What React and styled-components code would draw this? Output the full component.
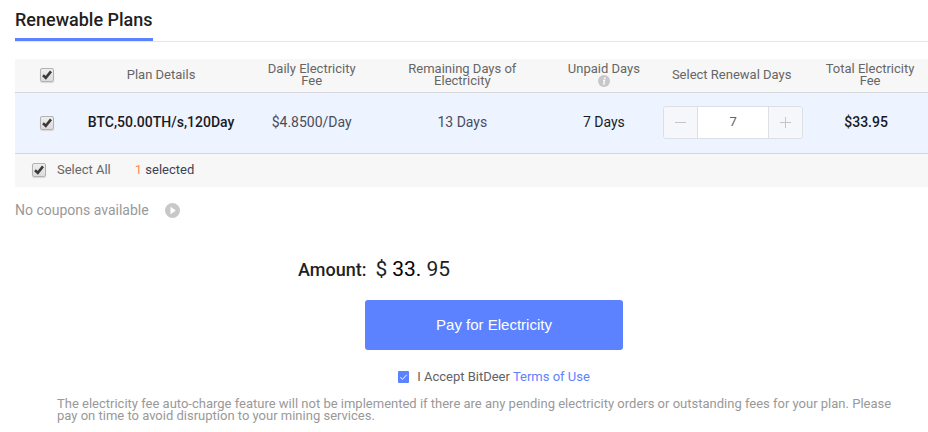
import React, { useState } from "react";
import styled, { createGlobalStyle } from "styled-components";

const Global = createGlobalStyle`
  * { box-sizing: border-box; }
  body { margin: 0; background: #fff; font-family: Roboto, "Liberation Sans", sans-serif; font-size: 13px; line-height: 16px; color: #666; }
  button, input { font: inherit; color: inherit; margin: 0; padding: 0; }
`;

const Page = styled.main`
  padding: 8px 0 8px 15px;
`;

const TitleBar = styled.header`
  display: flex;
  height: 34px;
  border-bottom: 1px solid #e6e6e6;
  margin-bottom: 17px;
`;

const Title = styled.h1`
  margin: 0;
  height: 33px;
  font-size: 18px;
  font-weight: 500;
  line-height: 24px;
  color: #1f1f24;
  border-bottom: 3px solid #5c82ff;
`;

const PlanTable = styled.table`
  width: 100%;
  table-layout: fixed;
  border-collapse: separate;
  border-spacing: 0;
  text-align: center;
`;

const Column = styled.col`
  width: ${(p) => p.$share}%;
`;

const HeadCell = styled.th`
  height: 34px;
  padding: 0 0 2px;
  background: #f7f7f7;
  border-bottom: 1px solid #d5d7dc;
  font-weight: 400;
  line-height: 12px;
  &:last-child { padding-left: 12px; }
`;

const Cell = styled.td`
  height: 61px;
  padding: 0 0 2px;
  background: #edf4ff;
  border-bottom: 1px solid #d5d7dc;
  font-size: 14px;
  color: ${(p) => (p.$tone === "dark" ? "#1a1a1f" : "#4a4c5c")};
  font-weight: ${(p) => (p.$strong ? 500 : 400)};
  &:last-child { padding-left: 4px; }
`;

const CheckHolder = styled.span`
  display: inline-grid;
  vertical-align: middle;
  > * { grid-area: 1 / 1; }
  > svg { pointer-events: none; }
  > input:not(:checked) + svg { visibility: hidden; }
`;

const GreyCheckInput = styled.input`
  appearance: none;
  width: 14px;
  height: 14px;
  border: 1px solid #b2b2b2;
  border-radius: 2px;
  background: linear-gradient(#eeeeee, #dcdcdc);
  box-shadow: 0 1px 1px #d8d8d8;
`;

const BlueCheckInput = styled.input`
  appearance: none;
  width: 11px;
  height: 12px;
  border-radius: 1px;
  background: #5c82ff;
`;

const InfoButton = styled.button`
  display: block;
  width: 12px;
  height: 12px;
  margin: 0 auto;
  border: 0;
  background: none;
  svg { display: block; }
`;

const Stepper = styled.div`
  display: inline-flex;
  vertical-align: middle;
  width: 140px;
  height: 33px;
  border: 1px solid #dcdfe6;
  border-radius: 3px;
  overflow: hidden;
`;

const StepButton = styled.button`
  display: grid;
  place-items: center;
  width: 33px;
  border: 0;
  background: #f5f7fa;
  color: #c0c4cc;
`;

const StepInput = styled.input`
  flex: 1;
  min-width: 0;
  border: 0;
  border-left: 1px solid #dcdfe6;
  border-right: 1px solid #dcdfe6;
  background: #fff;
  text-align: center;
  font-size: 13px;
  color: #606266;
`;

const SelectBar = styled.div`
  display: flex;
  align-items: center;
  gap: 24px;
  height: 33px;
  padding: 0 0 1px 17px;
  background: #f7f7f7;
`;

const SelectAll = styled.label`
  display: flex;
  align-items: center;
  gap: 11px;
`;

const Selected = styled.span`
  color: #3f4150;
`;

const Count = styled.span`
  color: #ff8a4c;
`;

const Coupons = styled.div`
  display: flex;
  align-items: center;
  gap: 16px;
  margin-top: 15px;
  font-size: 14px;
  color: #999;
`;

const PlainButton = styled.button`
  border: 0;
  background: none;
  svg { display: block; }
`;

const Payment = styled.section`
  display: flex;
  flex-direction: column;
  align-items: center;
  margin: 37px 0 0 45px;
`;

const Amount = styled.p`
  display: flex;
  align-items: baseline;
  gap: 9px;
  width: 392px;
  margin: 0;
  line-height: 28px;
  font-size: 21px;
  color: #1f1f24;
`;

const AmountLabel = styled.span`
  font-size: 18px;
  font-weight: 500;
`;

const Figure = styled.span`
  display: flex;
  gap: 5px;
`;

const Whole = styled.span`
  color: #000;
`;

const PayButton = styled.button`
  width: 258px;
  height: 50px;
  margin-top: 16px;
  border: 0;
  border-radius: 3px;
  background: #5c82ff;
  color: #fff;
  font-family: "Liberation Sans", sans-serif;
  font-size: 15px;
`;

const Terms = styled.div`
  display: flex;
  align-items: center;
  gap: 3px;
  margin-top: 19px;
  color: #606266;
`;

const Accept = styled.label`
  display: flex;
  align-items: center;
  gap: 8px;
`;

const TermsLink = styled.a`
  color: #5c82ff;
  text-decoration: none;
`;

const Note = styled.p`
  margin: 13px 32px 0 42px;
  line-height: 12px;
  color: #999;
`;

function GreyCheck(props) {
  return (
    <CheckHolder>
      <GreyCheckInput type="checkbox" {...props} />
      <svg width="14" height="14" viewBox="0 0 14 14" fill="none" stroke="#3b3b3b" strokeWidth="2.6">
        <path d="M3 7.2 5.8 9.8 11 3.4" />
      </svg>
    </CheckHolder>
  );
}

function BlueCheck(props) {
  return (
    <CheckHolder>
      <BlueCheckInput type="checkbox" {...props} />
      <svg width="11" height="12" viewBox="0 0 11 12" fill="none" stroke="#fff" strokeWidth="1">
        <path d="M2.3 6.3 4.5 8.3 8.8 3.8" />
      </svg>
    </CheckHolder>
  );
}

const shares = [7, 18, 15, 18, 13, 15, 14];

export default function App() {
  const [picked, setPicked] = useState(true);
  const [accepted, setAccepted] = useState(true);
  const [days, setDays] = useState(7);
  const toggle = () => setPicked(!picked);

  return (
    <>
      <Global />
      <Page>
        <TitleBar>
          <Title>Renewable Plans</Title>
        </TitleBar>
        <PlanTable>
          <colgroup>
            {shares.map((share, i) => (
              <Column key={i} $share={share} />
            ))}
          </colgroup>
          <thead>
            <tr>
              <HeadCell><GreyCheck aria-label="Select all plans" checked={picked} onChange={toggle} /></HeadCell>
              <HeadCell>Plan Details</HeadCell>
              <HeadCell>Daily Electricity<br />Fee</HeadCell>
              <HeadCell>Remaining Days of<br />Electricity</HeadCell>
              <HeadCell>
                Unpaid Days
                <InfoButton type="button" aria-label="About unpaid days">
                  <svg width="12" height="12" viewBox="0 0 12 12">
                    <circle cx="6" cy="6" r="6" fill="#c8c8c8" />
                    <circle cx="6.8" cy="3.2" r="0.9" fill="#fff" />
                    <path d="M5 5.3H6.6L5.7 9H6.9" fill="none" stroke="#fff" strokeWidth="1.2" />
                  </svg>
                </InfoButton>
              </HeadCell>
              <HeadCell>Select Renewal Days</HeadCell>
              <HeadCell>Total Electricity<br />Fee</HeadCell>
            </tr>
          </thead>
          <tbody>
            <tr>
              <Cell><GreyCheck aria-label="Select this plan" checked={picked} onChange={toggle} /></Cell>
              <Cell $tone="dark" $strong>BTC,50.00TH/s,120Day</Cell>
              <Cell>$4.8500/Day</Cell>
              <Cell>13 Days</Cell>
              <Cell $tone="dark">7 Days</Cell>
              <Cell>
                <Stepper>
                  <StepButton type="button" aria-label="Fewer days" onClick={() => setDays(Math.max(1, days - 1))}>
                    <svg width="11" height="11" viewBox="0 0 11 11" stroke="currentColor"><path d="M0 5.5H11" /></svg>
                  </StepButton>
                  <StepInput aria-label="Renewal days" value={days} onChange={(e) => setDays(Number(e.target.value) || 0)} />
                  <StepButton type="button" aria-label="More days" onClick={() => setDays(days + 1)}>
                    <svg width="11" height="11" viewBox="0 0 11 11" stroke="currentColor"><path d="M0 5.5H11M5.5 0V11" /></svg>
                  </StepButton>
                </Stepper>
              </Cell>
              <Cell $tone="dark" $strong>$33.95</Cell>
            </tr>
          </tbody>
        </PlanTable>
        <SelectBar>
          <SelectAll>
            <GreyCheck checked={picked} onChange={toggle} />
            Select All
          </SelectAll>
          <Selected><Count>{picked ? 1 : 0}</Count> selected</Selected>
        </SelectBar>
        <Coupons>
          No coupons available
          <PlainButton type="button" aria-label="Show coupons">
            <svg width="15" height="15" viewBox="0 0 15 15">
              <circle cx="7.5" cy="7.5" r="7.5" fill="#c8c8c8" />
              <path d="M5.5 3.8 10.8 7.5 5.5 11.2Z" fill="#fff" />
            </svg>
          </PlainButton>
        </Coupons>
        <Payment>
          <Amount>
            <AmountLabel>Amount:</AmountLabel>
            <Figure><span>$</span><Whole>33.</Whole><span>95</span></Figure>
          </Amount>
          <PayButton type="button">Pay for Electricity</PayButton>
          <Terms>
            <Accept>
              <BlueCheck checked={accepted} onChange={() => setAccepted(!accepted)} />
              I Accept BitDeer
            </Accept>
            <TermsLink href="#terms">Terms of Use</TermsLink>
          </Terms>
        </Payment>
        <Note>
          The electricity fee auto-charge feature will not be implemented if there are any pending electricity orders
          or outstanding fees for your plan. Please pay on time to avoid disruption to your mining services.
        </Note>
      </Page>
    </>
  );
}
